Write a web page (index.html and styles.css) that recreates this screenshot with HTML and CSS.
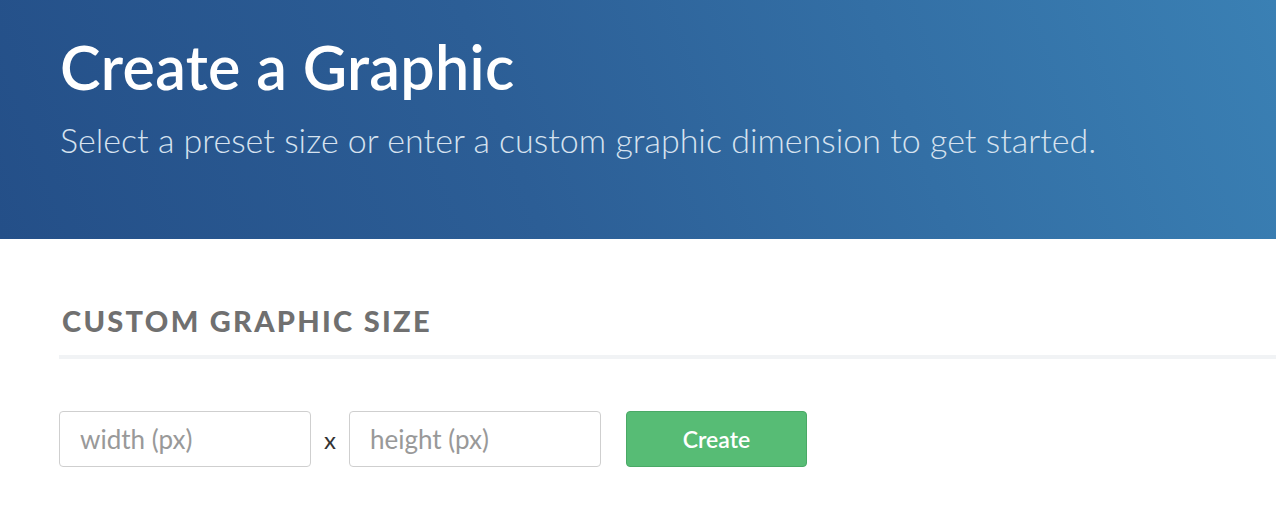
FILE: index.html
```html
<!DOCTYPE html>
<html>
<head>
<meta charset="utf-8">
<link rel="stylesheet" href="styles.css">
</head>
<body>
<header class="hero">
  <h1 class="hero-title">Create a Graphic</h1>
  <p class="hero-sub">Select a preset size or enter a custom graphic dimension to get started.</p>
</header>
<main class="content">
  <h2 class="section-title">CUSTOM GRAPHIC SIZE</h2>
  <div class="form-row">
    <input class="field" type="text" placeholder="width (px)">
    <span class="times">x</span>
    <input class="field" type="text" placeholder="height (px)">
    <button class="btn-create">Create</button>
  </div>
</main>
</body>
</html>
```
FILE: styles.css
```css
html, body { margin: 0; padding: 0; }
body { font-family: Lato, "Open Sans", sans-serif; background: #fff; width: 1276px; overflow: hidden; }
.hero {
  height: 239px;
  box-sizing: border-box;
  padding: 31px 0 0 60px;
  background: linear-gradient(70deg, #244f88 0%, #2c5e96 40%, #3a80b4 100%);
  color: #fff;
}
.hero-title { margin: 0; font-size: 61px; font-weight: 600; line-height: 72px; letter-spacing: 0.3px; }
.hero-sub { margin: 17px 0 0; font-size: 34px; font-weight: 300; color: #d6e2ef; line-height: 40px; }
.content { padding: 62px 0 0 59px; }
.section-title {
  margin: 0;
  padding: 0 0 14px 3px;
  border-bottom: 4px solid #f1f3f5;
  font-size: 29px; font-weight: 900; color: #707070; letter-spacing: 2.3px; line-height: 40px;
}
.form-row { display: flex; align-items: center; margin-top: 52px; }
.field {
  width: 252px; height: 56px; box-sizing: border-box;
  border: 1px solid #cfcfcf; border-radius: 4px;
  padding: 0 20px; font-family: inherit; font-size: 26px; color: #333;
  outline: none;
}
.field::placeholder { color: #999; }
.times { width: 38px; text-align: center; font-size: 24px; color: #333; }
.btn-create {
  margin-left: 25px; width: 181px; height: 56px;
  background: #57bc75; border: 1px solid #4aa966; border-radius: 4px;
  color: #fff; font-family: inherit; font-size: 23px; font-weight: 600;
}
```
